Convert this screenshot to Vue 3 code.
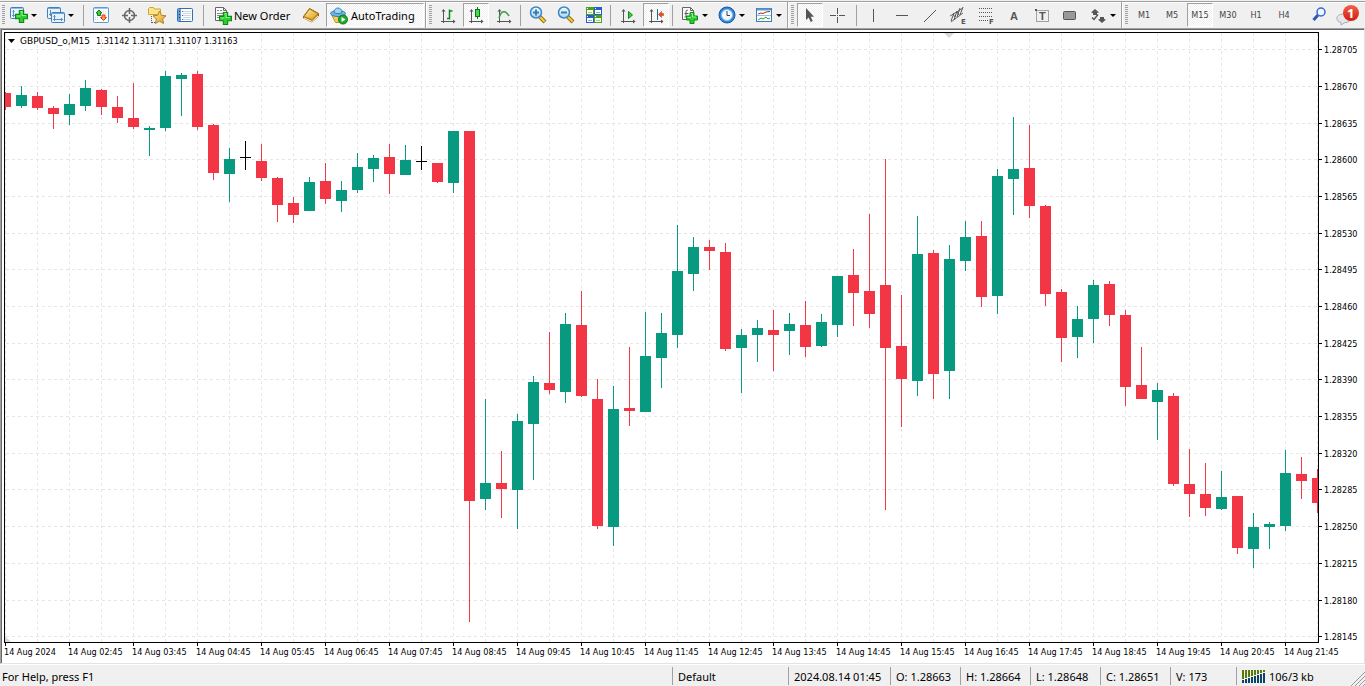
<script setup>
import { ref, computed } from 'vue'

const step = 16
const plotTop = 33

// high, body top, body bottom, low, kind (u = up, d = down, n = flat)
const rows = [
  [92, 93, 107, 110, 'd'], [86, 95, 106, 108, 'u'], [92, 96, 108, 110, 'd'], [106, 108, 114, 129, 'd'],
  [94, 104, 115, 125, 'u'], [80, 88, 106, 111, 'u'], [89, 90, 107, 115, 'd'], [96, 107, 118, 123, 'd'],
  [83, 118, 127, 129, 'd'], [126, 128, 130, 156, 'u'], [71, 76, 128, 131, 'u'], [73, 75, 79, 116, 'u'],
  [71, 74, 127, 130, 'd'], [124, 125, 173, 180, 'd'], [148, 159, 174, 202, 'u'], [141, 157, 158, 170, 'n'],
  [144, 161, 178, 181, 'd'], [177, 178, 205, 222, 'd'], [197, 203, 215, 223, 'd'], [177, 182, 211, 211, 'u'],
  [163, 181, 199, 204, 'd'], [181, 190, 201, 212, 'u'], [153, 167, 190, 193, 'u'], [155, 158, 169, 182, 'u'],
  [144, 157, 174, 194, 'd'], [145, 160, 175, 175, 'u'], [146, 161, 162, 170, 'n'], [163, 163, 182, 183, 'd'],
  [131, 131, 183, 193, 'u'], [131, 131, 501, 622, 'd'], [399, 483, 499, 510, 'u'], [451, 483, 489, 518, 'd'],
  [414, 421, 490, 529, 'u'], [376, 382, 424, 480, 'u'], [332, 383, 390, 394, 'd'], [313, 324, 392, 403, 'u'],
  [291, 325, 396, 397, 'd'], [379, 399, 526, 529, 'd'], [386, 409, 527, 546, 'u'], [347, 408, 411, 426, 'd'],
  [312, 356, 412, 412, 'u'], [313, 333, 358, 388, 'u'], [225, 271, 335, 348, 'u'], [237, 247, 274, 291, 'u'],
  [240, 247, 251, 270, 'd'], [243, 252, 349, 351, 'd'], [329, 335, 348, 393, 'u'], [320, 328, 335, 362, 'u'],
  [310, 330, 335, 371, 'd'], [313, 324, 331, 355, 'u'], [301, 325, 347, 357, 'd'], [314, 322, 346, 347, 'u'],
  [276, 276, 325, 337, 'u'], [249, 275, 293, 326, 'd'], [214, 291, 314, 328, 'd'], [159, 285, 348, 510, 'd'],
  [295, 346, 379, 427, 'd'], [216, 254, 381, 396, 'u'], [250, 253, 374, 399, 'd'], [245, 259, 371, 399, 'u'],
  [221, 237, 261, 271, 'u'], [221, 236, 297, 307, 'd'], [169, 176, 296, 314, 'u'], [117, 169, 179, 215, 'u'],
  [125, 168, 206, 218, 'd'], [205, 206, 294, 306, 'd'], [289, 292, 338, 362, 'd'], [306, 319, 337, 358, 'u'],
  [280, 285, 319, 343, 'u'], [281, 284, 315, 326, 'd'], [310, 315, 387, 406, 'd'], [347, 385, 399, 399, 'd'],
  [383, 390, 402, 440, 'u'], [393, 396, 484, 486, 'd'], [449, 484, 494, 517, 'd'], [463, 494, 508, 516, 'd'],
  [471, 497, 509, 510, 'u'], [496, 496, 548, 554, 'd'], [513, 527, 549, 568, 'u'], [522, 524, 527, 549, 'u'],
  [450, 473, 526, 531, 'u'], [457, 474, 481, 499, 'd'], [469, 478, 503, 513, 'd']
]

const candles = computed(() =>
  rows.map(([high, top, bottom, low, kind], i) => ({
    x: i * step,
    high: high - plotTop,
    top: top - plotTop,
    body: bottom - top,
    wick: low - high,
    kind
  }))
)

const prices = Array.from({ length: 17 }, (_, i) => ({
  label: (1.28705 - i * 0.00035).toFixed(5),
  y: Math.round(49.2 + i * 36.69) - plotTop
}))

const times = Array.from({ length: 21 }, (_, i) => ({
  label: i === 0 ? '14 Aug 2024' : `14 Aug ${String(i + 1).padStart(2, '0')}:45`,
  x: i * step * 4
}))

const frames = ['M1', 'M5', 'M15', 'M30', 'H1', 'H4']
const frame = ref('M15')
const autoTrading = ref(true)
const chartType = ref('candles')
const shift = ref(true)
const tool = ref('cursor')

const quotes = ['O: 1.28663', 'H: 1.28664', 'L: 1.28648', 'C: 1.28651']
</script>

<template>
  <div class="terminal">
    <svg class="defs" aria-hidden="true">
      <defs>
        <linearGradient id="gold" x1="0" y1="0" x2="1" y2="1">
          <stop offset="0" stop-color="#fff0a0" />
          <stop offset="1" stop-color="#d89a20" />
        </linearGradient>
        <linearGradient id="lens" x1="0" y1="0" x2="0" y2="1">
          <stop offset="0" stop-color="#f4fbff" />
          <stop offset="1" stop-color="#a8d8f4" />
        </linearGradient>
        <linearGradient id="badge" x1="0" y1="0" x2="0" y2="1">
          <stop offset="0" stop-color="#f4604c" />
          <stop offset="1" stop-color="#d01c0c" />
        </linearGradient>
        <symbol id="axes" viewBox="0 0 20 20">
          <path d="M5.5 5V18M3 16.5H17" stroke="#555" fill="none" />
          <path d="M3.5 6.5L5.5 4l2 2.5zM15 14.5l2.5 2-2.5 2z" fill="#555" />
        </symbol>
        <symbol id="plus" viewBox="0 0 12 12">
          <path d="M4 .5h4V4h3.5v4H8v3.5H4V8H.5V4H4z" fill="#2ecc2e" stroke="#0b8a14" />
          <path d="M5 1.5h1.5V5H10M1.5 5.5H5" stroke="#8cf28c" fill="none" />
        </symbol>
      </defs>
    </svg>

    <header class="toolbar">
      <div class="group first">
        <span class="grip"></span>
        <button class="btn drop" aria-label="New chart">
          <svg class="icon" viewBox="0 0 20 20">
            <rect x="1.5" y="2.5" width="13" height="11" rx="1" fill="#e6f2fc" stroke="#3f7fbe" />
            <path d="M2 3.5h12" stroke="#8fbfe8" />
            <path d="M4.5 5v7M3 10.5h7M3.5 6.5h2M9 9.5v2" stroke="#5a8fc4" fill="none" />
            <use href="#plus" x="6" y="5" width="13" height="13" />
          </svg>
          <i class="arrow"></i>
        </button>
        <button class="btn drop" aria-label="Profiles">
          <svg class="icon" viewBox="0 0 20 20">
            <rect x="1.5" y="2.5" width="13" height="11" rx="1" fill="#e6f2fc" stroke="#3f7fbe" />
            <path d="M2 3.5h12" stroke="#6ea6dc" />
            <path d="M4.5 5v6M3 9.5h3" stroke="#5a8fc4" />
            <rect x="5.5" y="7.5" width="13" height="10" rx="1" fill="#e6f2fc" stroke="#3f7fbe" />
            <path d="M6 8.5h12" stroke="#6ea6dc" />
            <path d="M8.5 10v6M7 14.5h10M7.5 11.5h2M15.5 13v3" stroke="#5a8fc4" />
          </svg>
          <i class="arrow"></i>
        </button>
        <span class="sep"></span>
        <button class="btn" aria-label="Market Watch">
          <svg class="icon" viewBox="0 0 20 20">
            <rect x="2.5" y="2.5" width="15" height="15" rx="1" fill="#fbfdff" stroke="#5c9bd6" />
            <path d="M3 3.5h14" stroke="#9cc6ee" />
            <path d="M12 6.5h4M12 8.5h4M4 12.5h4M4 14.5h4" stroke="#ccd8e4" stroke-dasharray="1 1" />
            <path d="M8 5l3 3H9.500v2.500h-3V8H5z" fill="#3ecf3e" stroke="#0b7a14" />
            <path d="M12.500 15.500l-3-3H11V10h3v2.500h1.500z" fill="#ff9a5c" stroke="#d8400c" />
          </svg>
        </button>
        <button class="btn" aria-label="Data Window">
          <svg class="icon" viewBox="0 0 20 20">
            <circle cx="10.500" cy="10.500" r="5" fill="none" stroke="#666" stroke-width="1.500" />
            <path d="M10.500 3v6M10.500 12v6M3 10.500h6M12 10.500h6" stroke="#666" stroke-width="1.500" />
          </svg>
        </button>
        <button class="btn" aria-label="Navigator">
          <svg class="icon" viewBox="0 0 20 20">
            <path d="M1.500 9.500v-6l1-1h4l1 1.500h6v5.500z" fill="#fbe58c" stroke="#d2a52c" />
            <path d="M4.500 11v7M5 17.500h4" stroke="#555" stroke-dasharray="1 1" />
            <path d="M12.500 6l2 4.300 4.500.500-3.400 3.100 1 4.600-4.100-2.300-4.100 2.300 1-4.600L6 10.800l4.500-.500z" fill="url(#gold)" stroke="#b8801c" />
          </svg>
        </button>
        <button class="btn" aria-label="Terminal">
          <svg class="icon" viewBox="0 0 20 20">
            <rect x="2.500" y="3.500" width="15" height="13" rx="1" fill="#fff" stroke="#2f6fb4" />
            <path d="M3 4h3v12H3z" fill="#5f9fdc" />
            <path d="M4 6.500h1M4 9.500h1M4 12.500h1" stroke="#123a6a" />
            <path d="M8 6.500h8M8 8.500h8M8 10.500h8M8 12.500h8M8 14.500h8" stroke="#c4d8ea" />
            <path d="M7 6.500h1M7 10.500h1M7 14.500h1" stroke="#d04040" />
          </svg>
        </button>
        <span class="sep"></span>
        <button class="btn order">
          <svg class="icon" viewBox="0 0 20 20">
            <path d="M2.500 2.500h8l3 3v10h-11z" fill="#fbfbfb" stroke="#666" />
            <path d="M10.500 2.500v3h3" fill="none" stroke="#666" />
            <path d="M4 5.500h2M7 5.500h2M4 8.500h7M4 10.500h7M4 12.500h5" stroke="#888" />
            <use href="#plus" x="6" y="7" width="13" height="13" />
          </svg>
          New Order
        </button>
        <button class="btn" aria-label="MetaEditor">
          <svg class="icon" viewBox="0 0 20 20">
            <path d="M2.500 11.500L8.500 3.500l9 5v2.500l-6.500 6-8.500-4z" fill="#c98a18" stroke="#8a5a10" />
            <path d="M3 11.500L8.500 4l8.500 4.700-6 6z" fill="url(#gold)" stroke="#b87c14" />
            <path d="M3 13l8 3.500 6-5.500" fill="none" stroke="#fff3c0" />
          </svg>
        </button>
        <button class="btn auto" :class="{ pressed: autoTrading }" @click="autoTrading = !autoTrading">
          <svg class="icon" viewBox="0 0 20 20">
            <path d="M3 10.500l3.500 7h6l4-7z" fill="#f4cf58" stroke="#c0922a" />
            <ellipse cx="9" cy="8.500" rx="7.500" ry="3" fill="#6db6e4" stroke="#2f7fb4" />
            <path d="M5 7.500c0-6 8-6 8 0-2 1.500-6 1.500-8 0z" fill="#9ed4f4" stroke="#2f7fb4" />
            <circle cx="14" cy="14.500" r="4.500" fill="#22a82c" stroke="#0d7a18" />
            <path d="M12.500 12v5l4-2.500z" fill="#fff" />
          </svg>
          AutoTrading
        </button>
      </div>

      <div class="group">
        <span class="grip"></span>
        <button class="btn" :class="{ pressed: chartType === 'bars' }" aria-label="Bar Chart" @click="chartType = 'bars'">
          <svg class="icon" viewBox="0 0 20 20">
            <use href="#axes" width="20" height="20" />
            <path d="M11.500 4.500v10M11.500 6h3M9 13.500h3" stroke="#0b8a14" stroke-width="1.500" />
          </svg>
        </button>
        <button class="btn" :class="{ pressed: chartType === 'candles' }" aria-label="Candlesticks" @click="chartType = 'candles'">
          <svg class="icon" viewBox="0 0 20 20">
            <use href="#axes" width="20" height="20" />
            <path d="M11.500 2v12" stroke="#0b7a14" />
            <rect x="9.500" y="4.500" width="4" height="7" fill="#3edc4a" stroke="#0b7a14" />
          </svg>
        </button>
        <button class="btn" :class="{ pressed: chartType === 'line' }" aria-label="Line Chart" @click="chartType = 'line'">
          <svg class="icon" viewBox="0 0 20 20">
            <use href="#axes" width="20" height="20" />
            <path d="M5 13c2-7 6-9 10-2" fill="none" stroke="#3a9a40" stroke-width="1.500" />
          </svg>
        </button>
        <span class="sep narrow"></span>
        <button class="btn" aria-label="Zoom In">
          <svg class="icon" viewBox="0 0 20 20">
            <path d="M12 12l5 5" stroke="#9a7010" stroke-width="4" />
            <path d="M12 12l4.500 4.500" stroke="#f2cc40" stroke-width="2" />
            <circle cx="8" cy="7.500" r="5.500" fill="url(#lens)" stroke="#3a86c4" stroke-width="1.500" />
            <path d="M5 7.500h6M8 4.500v6" stroke="#3a7cae" stroke-width="2" />
          </svg>
        </button>
        <button class="btn" aria-label="Zoom Out">
          <svg class="icon" viewBox="0 0 20 20">
            <path d="M12 12l5 5" stroke="#9a7010" stroke-width="4" />
            <path d="M12 12l4.500 4.500" stroke="#f2cc40" stroke-width="2" />
            <circle cx="8" cy="7.500" r="5.500" fill="url(#lens)" stroke="#3a86c4" stroke-width="1.500" />
            <path d="M5 7.500h6" stroke="#3a7cae" stroke-width="2" />
          </svg>
        </button>
        <button class="btn" aria-label="Tile Windows">
          <svg class="icon" viewBox="0 0 20 20">
            <path d="M2 2h8v8H2zM10 10h8v8h-8z" fill="#4aa21c" />
            <path d="M10 2h8v8h-8zM2 10h8v8H2z" fill="#2460cc" />
            <path d="M3 5h6v4H3zM11 5h6v4h-6zM3 13h6v4H3zM11 13h6v4h-6z" fill="#fff" />
            <path d="M4 7.500h4M12 15.500h4" stroke="#a4cc84" />
            <path d="M12 7.500h4M4 15.500h4" stroke="#90acdf" />
            <path d="M3 3.500h1M11 3.500h1M3 11.500h1M11 11.500h1" stroke="#fff" />
          </svg>
        </button>
        <span class="sep narrow"></span>
        <button class="btn" aria-label="Auto Scroll">
          <svg class="icon" viewBox="0 0 20 20">
            <use href="#axes" width="20" height="20" />
            <path d="M10.500 6.500v7l4-3.500z" fill="#3ecf3e" stroke="#0b8a14" />
          </svg>
        </button>
        <button class="btn" :class="{ pressed: shift }" aria-label="Chart Shift" @click="shift = !shift">
          <svg class="icon" viewBox="0 0 20 20">
            <use href="#axes" width="20" height="20" />
            <path d="M11.500 4v11" stroke="#1f6a9a" />
            <path d="M12.500 9.500l3-3v2h2v2h-2v2z" fill="#e8501c" stroke="#a8300c" stroke-width=".5" />
          </svg>
        </button>
        <span class="sep narrow"></span>
        <button class="btn drop" aria-label="Indicators">
          <svg class="icon" viewBox="0 0 20 20">
            <path d="M2.500 2.500h8l3 3v9h-11z" fill="#fbfbfb" stroke="#666" />
            <path d="M10.500 2.500v3h3" fill="none" stroke="#666" />
            <path d="M8 5.500c-2-1-2 1-2 3.500s0 3-1.500 3M4.500 8.500h4" fill="none" stroke="#555" />
            <use href="#plus" x="6" y="7" width="12" height="12" />
          </svg>
          <i class="arrow"></i>
        </button>
        <button class="btn drop" aria-label="Periods">
          <svg class="icon" viewBox="0 0 20 20">
            <circle cx="10" cy="10" r="8" fill="#2f86dc" stroke="#1a58a4" />
            <circle cx="10" cy="10" r="5.500" fill="#f4faff" stroke="#8cc0ee" />
            <path d="M10 6v4.500h3" fill="none" stroke="#345" />
          </svg>
          <i class="arrow"></i>
        </button>
        <button class="btn drop" aria-label="Templates">
          <svg class="icon" viewBox="0 0 20 20">
            <rect x="2.500" y="3.500" width="15" height="13" fill="#fff" stroke="#3a7cc0" />
            <path d="M3 4.500h14" stroke="#5c9bd6" stroke-width="2" />
            <path d="M3 10.500h14" stroke="#9cc0e0" />
            <path d="M4 9l3-1 2 .500 3-1.500 4-.500" fill="none" stroke="#a03018" />
            <path d="M4 15l3-2 2 1 3-2 2 2 2-1" fill="none" stroke="#2a9a3a" />
          </svg>
          <i class="arrow"></i>
        </button>
      </div>

      <div class="group">
        <span class="grip"></span>
        <button class="btn" :class="{ pressed: tool === 'cursor' }" aria-label="Cursor" @click="tool = 'cursor'">
          <svg class="icon" viewBox="0 0 20 20">
            <path d="M6 3v12l2.700-2.500 2 4.500 2-1-2-4.300H14z" fill="#555" />
          </svg>
        </button>
        <button class="btn" :class="{ pressed: tool === 'cross' }" aria-label="Crosshair" @click="tool = 'cross'">
          <svg class="icon" viewBox="0 0 20 20">
            <path d="M9.500 3v6M9.500 12v6M2 10.500h6M11 10.500h6M9 10.500h1" stroke="#555" />
          </svg>
        </button>
        <span class="sep"></span>
        <button class="btn" aria-label="Vertical Line">
          <svg class="icon" viewBox="0 0 20 20"><path d="M9.500 4v13" stroke="#555" /></svg>
        </button>
        <button class="btn" aria-label="Horizontal Line">
          <svg class="icon" viewBox="0 0 20 20"><path d="M4 10.500h12" stroke="#555" /></svg>
        </button>
        <button class="btn" aria-label="Trendline">
          <svg class="icon" viewBox="0 0 20 20"><path d="M4 17L16 5" stroke="#555" /></svg>
        </button>
        <button class="btn" aria-label="Equidistant Channel">
          <svg class="icon" viewBox="0 0 20 20">
            <path d="M2 11L15 3M3 17l12-9" stroke="#666" />
            <path d="M3 16l3-8M6 15l3-9M9 12l3-9M12 10l3-8M5 9l2 3M9 7l2 3" stroke="#555" fill="none" />
            <text class="mark" x="13" y="19">E</text>
          </svg>
        </button>
        <button class="btn" aria-label="Fibonacci Retracement">
          <svg class="icon" viewBox="0 0 20 20">
            <path d="M3 3.500h14M3 7.500h14M3 11.500h14M3 15.500h9" stroke="#555" stroke-dasharray="1 1" />
            <text class="mark" x="13" y="19">F</text>
          </svg>
        </button>
        <button class="btn" aria-label="Text">
          <svg class="icon" viewBox="0 0 20 20"><text class="letter" x="6" y="15">A</text></svg>
        </button>
        <button class="btn" aria-label="Text Label">
          <svg class="icon" viewBox="0 0 20 20">
            <rect x="4.500" y="5.500" width="12" height="11" fill="none" stroke="#555" stroke-dasharray="1 1" />
            <path d="M3 4h2v2H3z" fill="#555" />
            <text class="letter" x="7" y="15">T</text>
          </svg>
        </button>
        <button class="btn" aria-label="Rectangle">
          <svg class="icon" viewBox="0 0 20 20">
            <rect x="3.500" y="6.500" width="12" height="8" rx="1" fill="#999" stroke="#555" />
          </svg>
        </button>
        <button class="btn drop" aria-label="Arrows">
          <svg class="icon" viewBox="0 0 20 20">
            <path d="M7 4l4 3.500-2 .500v2H5V8L3 7.500zM14 18l-4-3.500 2-.500v-2h4v2l2 .500z" fill="#555" />
            <path d="M4 12.500l2 2 4-5" fill="none" stroke="#555" stroke-width="1.500" />
          </svg>
          <i class="arrow"></i>
        </button>
      </div>

      <div class="group last">
        <span class="grip"></span>
        <button
          v-for="f in frames"
          :key="f"
          class="btn frame"
          :class="{ pressed: f === frame }"
          @click="frame = f"
        >
          {{ f }}
        </button>
        <div class="tail">
          <button class="btn" aria-label="Search">
            <svg class="icon" viewBox="0 0 20 20">
              <path d="M9 10l-4.500 5" stroke="#2a55c0" stroke-width="3" />
              <circle cx="12" cy="7" r="4" fill="#eef6ff" stroke="#3a66d0" stroke-width="1.500" />
            </svg>
          </button>
          <button class="btn" aria-label="Messages">
            <svg class="icon wide" viewBox="0 0 24 24">
              <path d="M8 11c-9 0-9 7-3 8.500L5 22l4-2.500c8 0 8-8.500-1-8.500z" fill="#e4e6ea" stroke="#a8acb4" />
              <circle cx="15" cy="10" r="8" fill="url(#badge)" />
              <text class="count" x="11" y="15">1</text>
            </svg>
          </button>
        </div>
      </div>
    </header>

    <main class="chart">
      <svg class="plot" role="img" aria-label="GBPUSD M15 candlestick chart">
        <defs>
          <pattern id="cols" x="0" y="0" width="32" height="6" patternUnits="userSpaceOnUse">
            <rect width="1" height="3" fill="#e6e6e6" />
          </pattern>
          <pattern id="dashes" x="0" y="0" width="6" height="1" patternUnits="userSpaceOnUse">
            <rect x="1" width="3" height="1" fill="#e6e6e6" />
          </pattern>
        </defs>
        <rect width="100%" height="100%" fill="url(#cols)" />
        <rect
          v-for="p in prices"
          :key="p.label"
          x="0"
          :y="p.y"
          width="100%"
          height="1"
          fill="url(#dashes)"
        />
        <path d="M939 0h10l-5 5z" fill="#d8d8d8" />
        <path d="M0 603v6h6z" fill="#d8d8d8" />
        <g v-for="c in candles" :key="c.x" :class="c.kind">
          <rect :x="c.x" :y="c.high" width="1" :height="c.wick" />
          <rect :x="c.x - 5" :y="c.top" width="11" :height="c.body" />
        </g>
        <path d="M3 6h7l-3.500 4z" fill="#000" />
        <text class="label symbol" x="15" y="11">GBPUSD_o,M15</text>
        <text class="label" x="91" y="11">1.31142 1.31171 1.31107 1.31163</text>
      </svg>

      <svg class="prices">
        <g v-for="p in prices" :key="p.label">
          <rect x="0" :y="p.y + 2" width="4" height="1" />
          <text class="label" x="6" :y="p.y + 6">{{ p.label }}</text>
        </g>
      </svg>

      <svg class="times">
        <g v-for="t in times" :key="t.label">
          <rect :x="t.x + 2" y="0" width="1" height="4" />
          <text class="label" :x="t.x + 1" y="13">{{ t.label }}</text>
        </g>
      </svg>
    </main>

    <footer class="status">
      <span class="cell help">For Help, press F1</span>
      <span class="cell profile">Default</span>
      <span class="cell date">2024.08.14 01:45</span>
      <span v-for="q in quotes" :key="q" class="cell quote">{{ q }}</span>
      <span class="cell volume">V: 173</span>
      <span class="cell traffic">
        <svg class="bars" viewBox="0 0 24 13">
          <template v-for="n in 8" :key="n">
            <rect :x="(n - 1) * 3" y="0" width="2" :height="10 - n" fill="#5a7a08" />
            <rect :x="(n - 1) * 3" :y="11 - n" width="2" :height="n + 2" fill="#0a4468" />
          </template>
        </svg>
        106/3 kb
      </span>
      <svg class="sizer" viewBox="0 0 14 14">
        <path d="M0 14L14 0M4 14L14 4M8 14l6-6M12 14l2-2" stroke="#999" />
      </svg>
    </footer>
  </div>
</template>

<style>
body {
  background: #f0f0f0;
}
</style>

<style scoped>
.terminal {
  display: flex;
  flex-direction: column;
  min-height: 100vh;
  overflow: hidden;
  background: #f0f0f0;
  color: #000;
  font-family: 'Noto Sans', sans-serif;
  font-size: 11px;
}
.defs {
  position: absolute;
  width: 0;
  height: 0;
}

/* toolbar */
.toolbar {
  display: flex;
  height: 26px;
  margin-top: 1px;
  border-top: 1px solid #a0a0a0;
  box-shadow: inset 0 1px 0 #fff;
}
.group {
  display: flex;
  align-items: center;
  flex: none;
  padding: 1px 0;
  border-left: 1px solid #fff;
  border-right: 1px solid #a0a0a0;
}
.group.first {
  border-left: none;
}
.group.last {
  flex: 1;
  border-right: none;
}
.grip {
  width: 3px;
  height: 20px;
  margin: 0 2px;
  background: repeating-linear-gradient(#a0a0a0 0 1px, transparent 1px 2px);
}
.group.first .grip {
  margin: 0 0 0 2px;
}
.btn {
  display: flex;
  align-items: center;
  justify-content: center;
  flex: none;
  width: 26px;
  height: 24px;
  margin: 0 1px;
  padding: 0;
  border: 1px solid transparent;
  background: none;
  color: #000;
  font: inherit;
  white-space: nowrap;
}
.btn.pressed {
  border-color: #a0a0a0 #fff #fff #a0a0a0;
  background: repeating-conic-gradient(#fff 0 25%, #f0f0f0 0 50%) 0 0 / 2px 2px;
}
.btn.drop {
  width: 35px;
  justify-content: flex-start;
  gap: 2px;
  padding-left: 2px;
}
.btn.order {
  width: 88px;
  justify-content: flex-start;
  gap: 1px;
  padding-left: 4px;
}
.btn.auto {
  width: 98px;
  justify-content: flex-start;
  gap: 2px;
  padding-left: 2px;
}
.btn.frame {
  color: #444;
  font-family: 'DejaVu Sans Condensed', 'DejaVu Sans', sans-serif;
  font-size: 9px;
}
.icon {
  flex: none;
  width: 20px;
  height: 20px;
}
.icon.wide {
  width: 24px;
  height: 24px;
}
.arrow {
  flex: none;
  border: 3px solid transparent;
  border-top-color: #000;
  border-bottom: none;
}
.sep {
  width: 1px;
  height: 21px;
  margin: 0 3px 0 4px;
  background: #a0a0a0;
}
.sep.narrow {
  margin: 0 3px 0 2px;
}
.tail {
  display: flex;
  gap: 1px;
  margin-left: auto;
  padding-right: 3px;
}
.mark {
  fill: #555;
  font: bold 7px 'DejaVu Sans', sans-serif;
}
.letter {
  fill: #555;
  font: bold 11px 'Liberation Sans', sans-serif;
}
.count {
  fill: #fff;
  font: bold 13px 'Noto Sans', sans-serif;
}

/* chart window */
.chart {
  display: grid;
  flex: 1;
  grid-template-columns: minmax(0, 1fr) 46px;
  grid-template-rows: minmax(611px, 1fr) 21px;
  padding: 2px 0 0 2px;
  border: 1px solid #a0a0a0;
  border-right-color: #e3e3e3;
  border-bottom-color: #e3e3e3;
  box-shadow: inset 1px 1px 0 #696969;
  background: #fff;
}
.plot {
  width: 100%;
  height: 100%;
  box-sizing: border-box;
  border: 1px solid #000;
  margin-left: 1px;
  margin-top: 1px;
}
.prices {
  width: 46px;
  height: 100%;
}
.times {
  grid-column: 1 / 3;
  width: 100%;
  height: 21px;
}
.u {
  fill: #089981;
}
.d {
  fill: #f23645;
}
.n {
  fill: #000;
}
.label {
  fill: #000;
  font-family: 'DejaVu Sans Condensed', 'DejaVu Sans', sans-serif;
  font-size: 9px;
}
.symbol {
  font-family: 'DejaVu Sans', sans-serif;
}

/* status bar */
.status {
  display: flex;
  height: 22px;
  border-top: 1px solid #fff;
  box-sizing: border-box;
}
.cell {
  display: flex;
  align-items: center;
  flex: none;
  box-sizing: border-box;
  margin: 2px 0 1px;
  padding-left: 5px;
  border-left: 1px solid #a0a0a0;
  white-space: nowrap;
}
.help {
  flex: 1;
  padding-left: 2px;
  border-left: none;
}
.profile {
  width: 116px;
}
.date {
  width: 102px;
}
.quote {
  width: 70px;
}
.volume {
  width: 66px;
}
.traffic {
  width: 115px;
  gap: 3px;
}
.bars {
  width: 24px;
  height: 13px;
}
.sizer {
  align-self: flex-end;
  width: 14px;
  height: 14px;
}
</style>
